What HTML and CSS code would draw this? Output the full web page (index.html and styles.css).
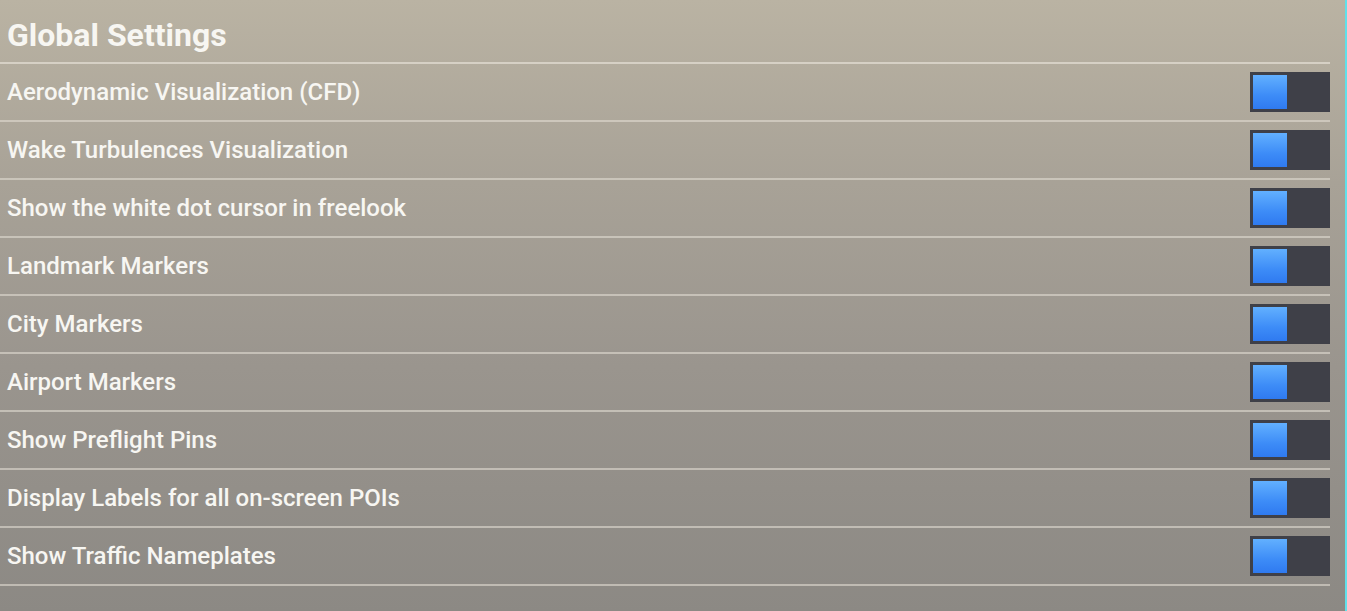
FILE: index.html
```html
<!DOCTYPE html>
<html>
<head>
<meta charset="utf-8">
<link rel="stylesheet" href="styles.css">
</head>
<body>
<div class="page">
  <div class="panel">
    <h1 class="title">Global Settings</h1>
    <div class="row"><span class="label">Aerodynamic Visualization (CFD)</span><span class="toggle"><span class="knob"></span></span></div>
    <div class="row"><span class="label">Wake Turbulences Visualization</span><span class="toggle"><span class="knob"></span></span></div>
    <div class="row"><span class="label">Show the white dot cursor in freelook</span><span class="toggle"><span class="knob"></span></span></div>
    <div class="row"><span class="label">Landmark Markers</span><span class="toggle"><span class="knob"></span></span></div>
    <div class="row"><span class="label">City Markers</span><span class="toggle"><span class="knob"></span></span></div>
    <div class="row"><span class="label">Airport Markers</span><span class="toggle"><span class="knob"></span></span></div>
    <div class="row"><span class="label">Show Preflight Pins</span><span class="toggle"><span class="knob"></span></span></div>
    <div class="row"><span class="label">Display Labels for all on-screen POIs</span><span class="toggle"><span class="knob"></span></span></div>
    <div class="row"><span class="label">Show Traffic Nameplates</span><span class="toggle"><span class="knob"></span></span></div>
  </div>
  <div class="edge"></div>
</div>
</body>
</html>
```
FILE: styles.css
```css
html, body {
  margin: 0;
  padding: 0;
  height: 100%;
}
body {
  background: linear-gradient(180deg, #bab3a3 0%, #a8a297 30%, #9a958e 60%, #8c8984 100%);
  font-family: Roboto, "Noto Sans", "Liberation Sans", sans-serif;
  color: #f7f6f2;
  overflow: hidden;
}
.page {
  display: flex;
  height: 611px;
}
.panel {
  width: 1330px;
  flex: none;
  display: flex;
  flex-direction: column;
}
.title {
  margin: 0;
  height: 64px;
  box-sizing: border-box;
  padding: 16px 0 0 7px;
  font-size: 32px;
  font-weight: 700;
  line-height: 38px;
  border-bottom: 2px solid rgba(225, 220, 210, 0.75);
}
.row {
  height: 56px;
  display: flex;
  align-items: center;
  justify-content: space-between;
  padding-left: 7px;
  border-bottom: 2px solid rgba(225, 220, 210, 0.6);
}
.label {
  font-size: 24px;
  font-weight: 500;
}
.toggle {
  width: 80px;
  height: 40px;
  box-sizing: border-box;
  padding: 3px;
  background: #3f4048;
  display: flex;
}
.knob {
  width: 34px;
  height: 34px;
  background: linear-gradient(180deg, #62b0ff 0%, #3d8cf7 60%, #2f7af0 100%);
}
.edge {
  margin-left: auto;
  width: 2px;
  background: #5fe0ea;
}
```
